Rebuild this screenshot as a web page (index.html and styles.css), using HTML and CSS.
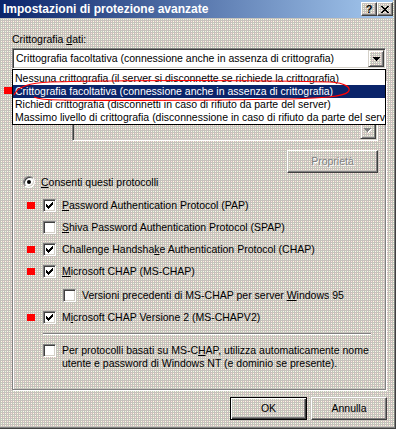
FILE: index.html
```html
<!DOCTYPE html>
<html lang="it">
<head>
    <meta charset="UTF-8" />
    <title>Impostazioni di protezione avanzate</title>
    <link rel="stylesheet" href="styles.css">
</head>
<body>
    <div class="window">
        <div class="titlebar">
            <span class="title">Impostazioni di protezione avanzate</span>
            <span class="tb-btn face">?</span>
            <span class="tb-btn face">
                <svg width="8" height="7" viewBox="0 0 8 7"><path d="M0 0h2v1h1v1h2v-1h1v-1h2v1h-1v1h-1v1h-1v1h1v1h1v1h1v1h-2v-1h-1v-1h-2v1h-1v1h-2v-1h1v-1h1v-1h1v-1h-1v-1h-1v-1h-1z"/></svg>
            </span>
        </div>

        <div class="content">
            <div class="label">Crittografia <u>d</u>ati:</div>

            <div class="combo-wrap">
                <div class="combo">
                    <span class="combo-text">Crittografia facoltativa (connessione anche in assenza di crittografia)</span>
                    <span class="drop-btn face">
                        <svg width="7" height="4" viewBox="0 0 7 4"><path d="M0 0h7v1h-1v1h-1v1h-1v1h-1v-1h-1v-1h-1v-1h-1z"/></svg>
                    </span>
                </div>
                <!-- open dropdown list, drawn over the group box -->
                <ul class="droplist">
                    <li>Nessuna crittografia (il server si disconnette se richiede la crittografia)</li>
                    <li class="selected">Crittografia facoltativa (connessione anche in assenza di crittografia)</li>
                    <li>Richiedi crittografia (disconnetti in caso di rifiuto da parte del server)</li>
                    <li>Massimo livello di crittografia (disconnessione in caso di rifiuto da parte del server)</li>
                </ul>
            </div>

            <div class="group">
                <!-- EAP row sits under the open list -->
                <div class="eap-row">
                    <span class="radio"></span>
                </div>
                <div class="combo eap-combo">
                    <span class="combo-text"></span>
                    <span class="drop-btn">
                        <svg width="8" height="5" viewBox="0 0 8 5"><path fill="#fff" d="M1 1h7v1h-1v1h-1v1h-1v1h-1v-1h-1v-1h-1v-1h-1z"/><path fill="#808080" d="M0 0h7v1h-1v1h-1v1h-1v1h-1v-1h-1v-1h-1v-1h-1z"/></svg>
                    </span>
                </div>
                <div class="btn props disabled">Proprietà</div>

                <div class="radio-row">
                    <span class="radio checked"></span>
                    <span><u>C</u>onsenti questi protocolli</span>
                </div>

                <div class="check-row first">
                    <span class="mark on"></span>
                    <span class="check"><svg width="7" height="7" viewBox="0 0 7 7"><path d="M0 2h1v1h1v1h1v-1h1v-1h1v-1h1v-1h1v3h-1v1h-1v1h-1v1h-1v1h-1v-1h-1v-1h-1z"/></svg></span>
                    <span><u>P</u>assword Authentication Protocol (PAP)</span>
                </div>
                <div class="check-row">
                    <span class="mark"></span>
                    <span class="check"></span>
                    <span><u>S</u>hiva Password Authentication Protocol (SPAP)</span>
                </div>
                <div class="check-row">
                    <span class="mark on"></span>
                    <span class="check"><svg width="7" height="7" viewBox="0 0 7 7"><path d="M0 2h1v1h1v1h1v-1h1v-1h1v-1h1v-1h1v3h-1v1h-1v1h-1v1h-1v1h-1v-1h-1v-1h-1z"/></svg></span>
                    <span>Challenge Handsha<u>k</u>e Authentication Protocol (CHAP)</span>
                </div>
                <div class="check-row">
                    <span class="mark on"></span>
                    <span class="check"><svg width="7" height="7" viewBox="0 0 7 7"><path d="M0 2h1v1h1v1h1v-1h1v-1h1v-1h1v-1h1v3h-1v1h-1v1h-1v1h-1v1h-1v-1h-1v-1h-1z"/></svg></span>
                    <span><u>M</u>icrosoft CHAP (MS-CHAP)</span>
                </div>
                <div class="check-row indent">
                    <span class="check"></span>
                    <span>Versioni precedenti di MS-CHAP per server <u>W</u>indows 95</span>
                </div>
                <div class="check-row">
                    <span class="mark on"></span>
                    <span class="check"><svg width="7" height="7" viewBox="0 0 7 7"><path d="M0 2h1v1h1v1h1v-1h1v-1h1v-1h1v-1h1v3h-1v1h-1v1h-1v1h-1v1h-1v-1h-1v-1h-1z"/></svg></span>
                    <span>M<u>i</u>crosoft CHAP Versione 2 (MS-CHAPV2)</span>
                </div>

                <div class="sep"></div>

                <div class="check-row">
                    <span class="mark"></span>
                    <span class="check"></span>
                    <span>Per protocolli basati su MS-C<u>H</u>AP, utilizza automaticamente nome<br>utente e password di Windows NT (e dominio se presente).</span>
                </div>
            </div>

            <div class="buttons">
                <button class="btn default">OK</button>
                <button class="btn cancel">Annulla</button>
            </div>
        </div>

        <!-- red markings drawn on top of the screenshot -->
        <span class="mark-list"></span>
        <svg class="scribble" width="396" height="130" viewBox="0 0 396 130">
            <path d="M14 95 C18 86 30 83 50 82 C120 80 250 80 330 82 C346 83 352 88 348 92 C343 97 320 98 290 99 C220 100 120 101 60 100 C45 100 38 99 34 97" fill="none" stroke="#f00" stroke-width="1.2"/>
        </svg>
    </div>
</body>
</html>
```

FILE: styles.css
```css
body {
    margin: 0;
    font: 10.5px/13px "Liberation Sans", Arial, sans-serif;
    color: #000;
}
u {
    text-decoration-thickness: 1px;
    text-underline-offset: 1px;
}
/* dithered dialog grey */
.window, .face {
    background-color: #c6c2bc;
    background-image:
        conic-gradient(at 1px 1px, transparent 75%, #fffce0 0),
        conic-gradient(at 1px 1px, transparent 75%, #ffdede 0),
        conic-gradient(at 1px 1px, transparent 75%, #e6fbdc 0),
        conic-gradient(at 1px 1px, transparent 75%, #fff4ec 0);
    background-size: 4px 4px;
    background-position: 1px 1px, 3px 1px, 1px 3px, 3px 3px;
}
.window {
    position: relative;
    box-sizing: border-box;
    width: 396px;
    height: 429px;
    border-right: 1px solid #404040;
    border-bottom: 1px solid #404040;
    box-shadow: inset -1px -1px #808080;
    overflow: hidden;
}
.titlebar {
    display: flex;
    align-items: center;
    height: 18px;
    margin-right: 2px;
    padding-left: 3px;
    background: linear-gradient(90deg, #0a246a, #a6caf0);
}
.title {
    flex: 1;
    color: #fff;
    font-weight: bold;
    font-size: 12px;
    line-height: 18px;
}
.tb-btn {
    display: flex;
    align-items: center;
    justify-content: center;
    box-sizing: border-box;
    width: 16px;
    height: 14px;
    border: 1px solid;
    border-color: #fff #404040 #404040 #fff;
    box-shadow: inset -1px -1px #808080;
    font-weight: bold;
    font-size: 11px;
}
.content {
    padding: 15px 9px 0 12px;
}
.label {
    height: 13px;
}
.combo-wrap {
    position: relative;
    margin-top: 2px;
}
.combo {
    display: flex;
    box-sizing: border-box;
    height: 21px;
    padding: 1px;
    background: #fff;
    border: 1px solid;
    border-color: #808080 #fff #fff #808080;
    box-shadow: inset 1px 1px #404040, inset -1px -1px #d4d0c8;
}
.combo-text {
    flex: 1;
    padding-left: 2px;
    line-height: 17px;
    white-space: nowrap;
}
.drop-btn {
    display: flex;
    align-items: center;
    justify-content: center;
    box-sizing: border-box;
    width: 16px;
    border: 1px solid;
    border-color: #d4d0c8 #404040 #404040 #d4d0c8;
    box-shadow: inset 1px 1px #fff, inset -1px -1px #808080;
}
.droplist {
    position: absolute;
    top: 100%;
    left: 0;
    right: 0;
    z-index: 2;
    margin: 0;
    padding: 2px 0 0;
    list-style: none;
    background: #fff;
    border: 1px solid #000;
}
.droplist li {
    height: 13px;
    padding-left: 2px;
    white-space: nowrap;
    overflow: hidden;
}
.droplist .selected {
    background: #0a246a;
    color: #fff;
}
.group {
    margin-top: 11px;
    padding-bottom: 19px;
    border: 1px solid #808080;
    box-shadow: inset 1px 1px #fff, 1px 1px #fff;
}
.eap-row {
    display: flex;
    height: 13px;
    margin: 17px 0 0 10px;
}
.eap-combo {
    width: 306px;
    margin: 9px 0 0 59px;
    background: transparent;
}
.btn {
    box-sizing: border-box;
    height: 23px;
    padding: 0;
    background: transparent;
    border: 1px solid;
    border-color: #fff #404040 #404040 #fff;
    box-shadow: inset -1px -1px #808080;
    font: inherit;
    line-height: 21px;
    text-align: center;
    color: #000;
}
.props {
    width: 91px;
    margin: 9px 0 0 274px;
}
.disabled {
    color: #808080;
    text-shadow: 1px 1px #fff;
}
.radio-row {
    display: flex;
    gap: 6px;
    margin: 3px 0 0 10px;
}
.radio {
    position: relative;
    box-sizing: border-box;
    width: 12px;
    height: 12px;
    flex: none;
    border-radius: 50%;
    background: #fff;
    border: 1px solid;
    border-color: #808080 #fff #fff #808080;
    box-shadow: inset 1px 1px #404040, inset -1px -1px #d4d0c8;
}
.radio.checked::after {
    content: "";
    position: absolute;
    left: 3px;
    top: 3px;
    width: 4px;
    height: 4px;
    border-radius: 50%;
    background: #000;
}
.check-row {
    display: flex;
    align-items: flex-start;
    margin-top: 9px;
    padding-left: 14px;
}
.check-row.first {
    margin-top: 10px;
}
.check-row.indent {
    margin-top: 11px;
    padding-left: 50px;
}
.mark {
    flex: none;
    width: 8px;
    height: 7px;
    margin: 3px 8px 0 0;
}
.mark.on {
    background: #f00;
}
.check {
    display: flex;
    align-items: center;
    justify-content: center;
    flex: none;
    box-sizing: border-box;
    width: 13px;
    height: 13px;
    margin-right: 6px;
    background: #fff;
    border: 1px solid;
    border-color: #808080 #fff #fff #808080;
    box-shadow: inset 1px 1px #404040, inset -1px -1px #d4d0c8;
}
.sep {
    width: 328px;
    margin: 9px 0 0 30px;
    border-top: 1px solid #808080;
    border-bottom: 1px solid #fff;
}
.buttons {
    display: flex;
    justify-content: flex-end;
    gap: 4px;
    margin: 7px -1px 0 0;
}
.default {
    width: 77px;
    border: 1px solid #000;
    box-shadow: inset 1px 1px #fff, inset -1px -1px #404040, inset -2px -2px #808080;
}
.cancel {
    width: 76px;
}
.mark-list {
    position: absolute;
    left: 4px;
    top: 87px;
    width: 8px;
    height: 7px;
    background: #f00;
}
.scribble {
    position: absolute;
    left: 0;
    top: 0;
    z-index: 3;
    pointer-events: none;
}
```
